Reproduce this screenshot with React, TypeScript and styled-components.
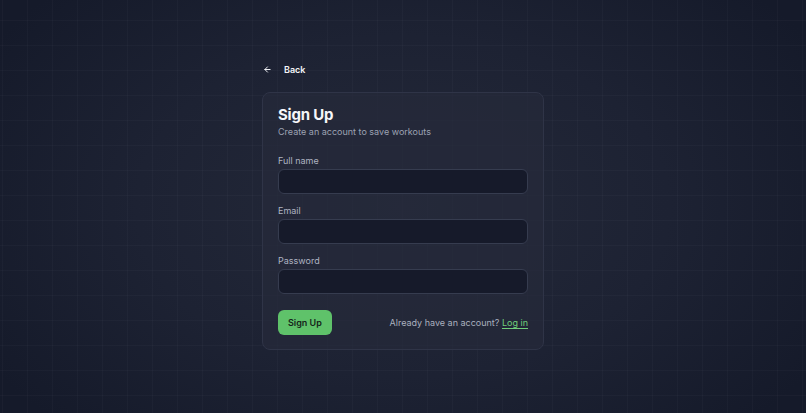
import styled, { createGlobalStyle } from 'styled-components';

const GlobalStyle = createGlobalStyle`
  html, body {
    margin: 0;
    padding: 0;
    height: 100%;
  }
  body {
    font-family: Inter, 'Liberation Sans', sans-serif;
    background: #161b2c;
    color: #f2f4f8;
    -webkit-font-smoothing: antialiased;
  }
  #root {
    height: 100%;
  }
`;

function ArrowLeft() {
  return (
    <svg width="9" height="9" viewBox="0 0 24 24" fill="none" stroke="currentColor" strokeWidth="2.6" strokeLinecap="round" strokeLinejoin="round">
      <path d="M19 12H5" />
      <path d="M12 19l-7-7 7-7" />
    </svg>
  );
}

function App() {
  return (
    <Page>
      <GlobalStyle />
      <Column>
        <BackLink href="#">
          <ArrowLeft />
          <span>Back</span>
        </BackLink>

        <Card>
          <Header>
            <Title>Sign Up</Title>
            <Subtitle>Create an account to save workouts</Subtitle>
          </Header>

          <Field>
            <Label htmlFor="name">Full name</Label>
            <Input id="name" type="text" />
          </Field>
          <Field>
            <Label htmlFor="email">Email</Label>
            <Input id="email" type="email" />
          </Field>
          <Field>
            <Label htmlFor="password">Password</Label>
            <Input id="password" type="password" />
          </Field>

          <Footer>
            <PrimaryButton type="button">Sign Up</PrimaryButton>
            <Hint>
              Already have an account? <LoginLink href="#">Log in</LoginLink>
            </Hint>
          </Footer>
        </Card>
      </Column>
    </Page>
  );
}

export default App;

const Page = styled.div`
  min-height: 100vh;
  box-sizing: border-box;
  display: flex;
  justify-content: center;
  padding-top: 60px;
  background-color: #171c2d;
  background-image:
    linear-gradient(rgba(255, 255, 255, 0.024) 1px, transparent 1px),
    linear-gradient(90deg, rgba(255, 255, 255, 0.024) 1px, transparent 1px),
    radial-gradient(ellipse 60% 75% at 50% 50%, #242939 0%, #1d2233 55%, #151a2a 100%);
  background-size: 25px 25px, 25px 25px, 100% 100%;
  background-position: 2px 20px, 2px 20px, 0 0;
`;

const Column = styled.div`
  width: 282px;
  display: flex;
  flex-direction: column;
  gap: 14px;
`;

const BackLink = styled.a`
  display: inline-flex;
  align-items: center;
  gap: 12px;
  align-self: flex-start;
  margin-left: 1px;
  height: 18px;
  color: #f3f4f7;
  text-decoration: none;
  font-size: 9px;
  font-weight: 600;
`;

const Card = styled.div`
  box-sizing: border-box;
  background: rgba(38, 42, 58, 0.72);
  border: 1px solid #2f3447;
  border-radius: 8px;
  padding: 12px 15px 14px;
  display: flex;
  flex-direction: column;
  gap: 11px;
`;

const Header = styled.div`
  display: flex;
  flex-direction: column;
  margin-bottom: 6px;
`;

const Title = styled.h1`
  margin: 0;
  font-size: 15px;
  font-weight: 700;
  letter-spacing: -0.2px;
  line-height: 20px;
  color: #f5f6f9;
`;

const Subtitle = styled.p`
  margin: 0;
  font-size: 9px;
  line-height: 13px;
  color: #9ca2b3;
`;

const Field = styled.div`
  display: flex;
  flex-direction: column;
  gap: 2px;
`;

const Label = styled.label`
  font-size: 9px;
  line-height: 12px;
  color: #aeb3c1;
`;

const Input = styled.input`
  box-sizing: border-box;
  height: 25px;
  width: 100%;
  border-radius: 6px;
  border: 1px solid #363c4f;
  background: #161a2a;
  color: #e8eaf0;
  font-family: inherit;
  font-size: 9px;
  padding: 0 8px;
  outline: none;
`;

const Footer = styled.div`
  display: flex;
  align-items: center;
  justify-content: space-between;
  margin-top: 5px;
`;

const PrimaryButton = styled.button`
  height: 25px;
  padding: 0 10px;
  border: none;
  border-radius: 6px;
  background: #5fc26a;
  color: #15251a;
  font-family: inherit;
  font-size: 9px;
  font-weight: 600;
  cursor: pointer;
`;

const Hint = styled.span`
  font-size: 9px;
  color: #aab0bf;
`;

const LoginLink = styled.a`
  color: #6fd07a;
  text-decoration: underline;
  text-underline-offset: 2px;
`;
